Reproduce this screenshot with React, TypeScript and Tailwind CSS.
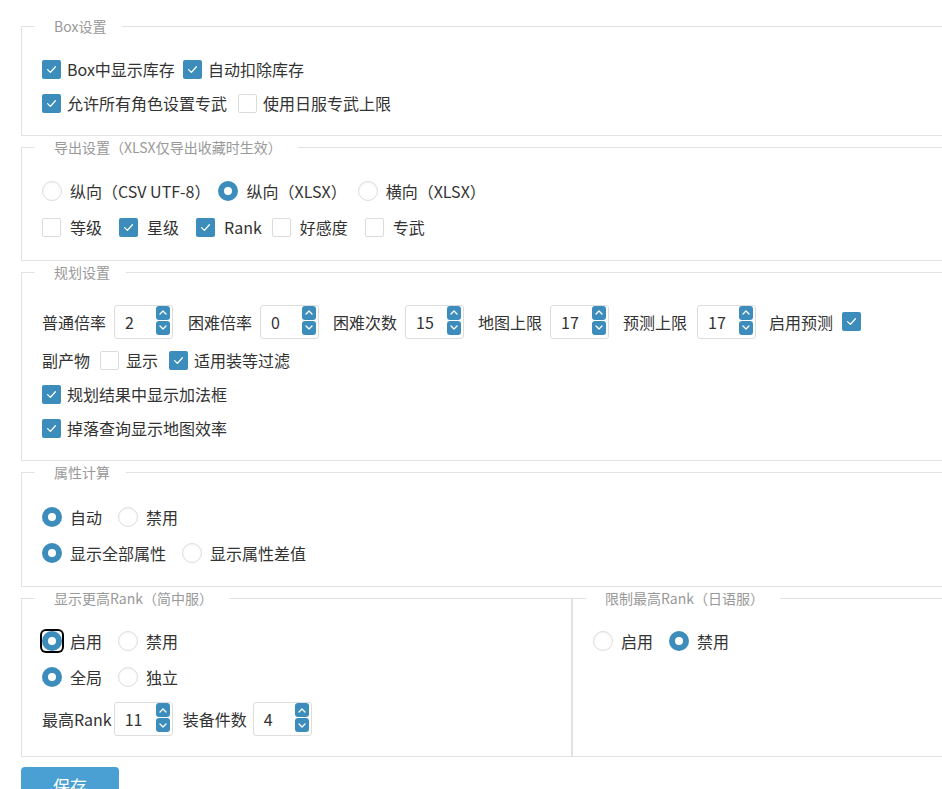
import React from 'react'
import clsx from 'clsx'

function Check({ on }: { on?: boolean }) {
  if (!on) return <span className="h-[19px] w-[19px] shrink-0 rounded-[2px] border border-[#dcdcdc] bg-white" />
  return (
    <span className="flex h-[19px] w-[19px] shrink-0 items-center justify-center rounded-[2px] bg-[#3c8dbc]">
      <svg width="11" height="9" viewBox="0 0 11 9" fill="none">
        <path d="M1.6 4.6l2.8 2.8 5-5.6" stroke="#fff" strokeWidth="1.3" strokeLinecap="round" strokeLinejoin="round" />
      </svg>
    </span>
  )
}

function Radio({ on, focus }: { on?: boolean; focus?: boolean }) {
  const dot = on ? (
    <span className="flex h-5 w-5 shrink-0 items-center justify-center rounded-full bg-[#3c8dbc]">
      <span className="h-2 w-2 rounded-full bg-white" />
    </span>
  ) : (
    <span className="h-5 w-5 shrink-0 rounded-full border border-[#dcdcdc] bg-white shadow-[inset_0_1px_2px_rgba(0,0,0,0.05)]" />
  )
  if (!focus) return dot
  return <span className="flex h-5 w-5 shrink-0 rounded-[4px] ring-2 ring-black">{dot}</span>
}

function Num({ v }: { v: string }) {
  return (
    <span className="flex h-[34px] w-[59px] shrink-0 items-center justify-between rounded-[3px] border border-[#dddddd] bg-white pl-[10px] pr-[2px]">
      <span>{v}</span>
      <span className="flex flex-col gap-px self-start">
        <span className="flex h-[14px] w-[14px] items-center justify-center rounded-[3px] bg-[#3c8dbc]">
          <svg width="8" height="5" viewBox="0 0 8 5" fill="none">
            <path d="M1 4l3-3 3 3" stroke="#fff" strokeWidth="1.3" strokeLinecap="round" strokeLinejoin="round" />
          </svg>
        </span>
        <span className="flex h-[14px] w-[14px] items-center justify-center rounded-[3px] bg-[#3c8dbc]">
          <svg width="8" height="5" viewBox="0 0 8 5" fill="none">
            <path d="M1 1l3 3 3-3" stroke="#fff" strokeWidth="1.3" strokeLinecap="round" strokeLinejoin="round" />
          </svg>
        </span>
      </span>
    </span>
  )
}

function Box({ legend, children, pt = 'pt-[15px]', pb = 'pb-[15px]' }: { legend: string; children: React.ReactNode; pt?: string; pb?: string }) {
  return (
    <fieldset className="min-w-0 border border-[#e2e2e2]">
      <legend className="ml-[13px] pl-[19px] pr-4 text-[14px] leading-[22px] text-[#999]">{legend}</legend>
      <div className={clsx('px-5', pt, pb)}>{children}</div>
    </fieldset>
  )
}

export default function App() {
  return (
    <div className="h-screen w-full overflow-hidden bg-white font-['Noto_Sans_CJK_SC',sans-serif] text-base text-[#333]">
      <div className="ml-[21px] w-[1102px] pt-[15px]">
        <Box legend="Box设置">
          <div className="flex h-[34px] items-center">
            <Check on /><span className="ml-[6px] mr-2">Box中显示库存</span>
            <Check on /><span className="ml-[6px]">自动扣除库存</span>
          </div>
          <div className="flex h-[34px] items-center">
            <Check on /><span className="ml-[6px] mr-[11px]">允许所有角色设置专武</span>
            <Check /><span className="ml-[6px]">使用日服专武上限</span>
          </div>
        </Box>

        <Box legend="导出设置（XLSX仅导出收藏时生效）">
          <div className="flex h-[36px] items-center">
            <Radio /><span className="ml-2 mr-2">纵向（CSV UTF-8）</span>
            <Radio on /><span className="ml-2 mr-[11px]">纵向（XLSX）</span>
            <Radio /><span className="ml-2">横向（XLSX）</span>
          </div>
          <div className="flex h-[36px] items-center">
            <Check /><span className="ml-[9px] mr-[17px]">等级</span>
            <Check on /><span className="ml-[9px] mr-[17px]">星级</span>
            <Check on /><span className="ml-[9px] mr-[10px]">Rank</span>
            <Check /><span className="ml-[9px] mr-[17px]">好感度</span>
            <Check /><span className="ml-[9px]">专武</span>
          </div>
        </Box>

        <Box legend="规划设置" pt="pt-[17px]">
          <div className="flex h-[43px] items-center">
            <span className="mr-2">普通倍率</span><Num v="2" />
            <span className="ml-[15px] mr-2">困难倍率</span><Num v="0" />
            <span className="ml-[14px] mr-2">困难次数</span><Num v="15" />
            <span className="ml-[14px] mr-2">地图上限</span><Num v="17" />
            <span className="ml-[14px] mr-[10px]">预测上限</span><Num v="17" />
            <span className="ml-[13px] mr-[9px]">启用预测</span><Check on />
          </div>
          <div className="flex h-[34px] items-center">
            <span className="mr-[10px]">副产物</span>
            <Check /><span className="ml-[7px] mr-[11px]">显示</span>
            <Check on /><span className="ml-[6px]">适用装等过滤</span>
          </div>
          <div className="flex h-[34px] items-center">
            <Check on /><span className="ml-[6px]">规划结果中显示加法框</span>
          </div>
          <div className="flex h-[34px] items-center">
            <Check on /><span className="ml-[6px]">掉落查询显示地图效率</span>
          </div>
        </Box>

        <Box legend="属性计算" pt="pt-[16px]">
          <div className="flex h-[36px] items-center">
            <Radio on /><span className="ml-2 mr-4">自动</span>
            <Radio /><span className="ml-2">禁用</span>
          </div>
          <div className="flex h-[36px] items-center">
            <Radio on /><span className="ml-2 mr-4">显示全部属性</span>
            <Radio /><span className="ml-2">显示属性差值</span>
          </div>
        </Box>

        <div className="grid grid-cols-2">
          <Box legend="显示更高Rank（简中服）" pt="pt-[14px]" pb="pb-[20px]">
            <div className="flex h-[36px] items-center">
              <Radio on focus /><span className="ml-2 mr-4">启用</span>
              <Radio /><span className="ml-2">禁用</span>
            </div>
            <div className="flex h-[36px] items-center">
              <Radio on /><span className="ml-2 mr-4">全局</span>
              <Radio /><span className="ml-2">独立</span>
            </div>
            <div className="mt-[7px] flex h-[34px] items-center">
              <span className="mr-[2px]">最高Rank</span><Num v="11" />
              <span className="ml-[10px] mr-[6px]">装备件数</span><Num v="4" />
            </div>
          </Box>
          <Box legend="限制最高Rank（日语服）" pt="pt-[14px]">
            <div className="flex h-[36px] items-center">
              <Radio /><span className="ml-2 mr-4">启用</span>
              <Radio on /><span className="ml-2">禁用</span>
            </div>
          </Box>
        </div>

        <button className="mt-[10px] h-[38px] w-[98px] rounded-[4px] bg-[#4a9fd3] text-[17px] text-white">保存</button>
      </div>
    </div>
  )
}
